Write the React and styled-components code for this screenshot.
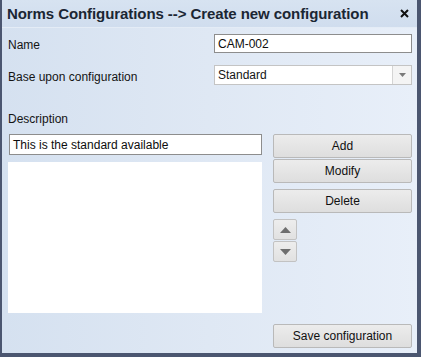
import React from "react";
import styled, { createGlobalStyle } from "styled-components";

const GlobalStyle = createGlobalStyle`
  html, body {
    margin: 0;
    padding: 0;
    background: #ffffff;
  }
  * {
    box-sizing: border-box;
  }
`;

const Window = styled.div`
  width: 421px;
  height: 357px;
  display: flex;
  flex-direction: column;
  border-left: 2px solid #4b5670;
  border-right: 4px solid #4b5670;
  border-bottom: 4px solid #4b5670;
  font-family: "Liberation Sans", Arial, sans-serif;
  font-size: 12px;
  color: #141414;
  background: linear-gradient(to right, #d5e1f0 0%, #dfe8f4 50%, #e8eff9 100%);
`;

const TitleBar = styled.div`
  height: 28px;
  flex: none;
  display: flex;
  align-items: center;
  justify-content: space-between;
  padding: 0 8px 1px 5px;
  background: linear-gradient(to bottom, #d7e3f1, #d0ddee);
  border-bottom: 1px solid #e4ecf6;
`;

const Title = styled.h1`
  margin: 0;
  font-size: 15px;
  font-weight: bold;
  color: #1b2633;
  letter-spacing: -0.08px;
`;

const CloseIcon = styled.svg`
  width: 9px;
  height: 9px;
  margin-top: 1px;
`;

const Body = styled.div`
  flex: 1;
  display: flex;
  flex-direction: column;
  padding: 6px 5px 5px 6px;
`;

const FieldRow = styled.div`
  display: grid;
  grid-template-columns: 206px 198px;
  align-items: center;
  height: ${(p) => p.$h}px;
  margin-bottom: ${(p) => p.$gap || 0}px;
`;

const Label = styled.label`
  padding-top: 3px;
`;

const TextBox = styled.div`
  height: ${(p) => p.$h || 19}px;
  background: #ffffff;
  border: 1px solid ${(p) => (p.$dark ? "#8d8d8d" : "#b6b6b6")};
  display: flex;
  align-items: center;
  padding-left: 3px;
  color: #0d0d0d;
`;

const SelectBox = styled.div`
  height: 20px;
  background: #ffffff;
  border: 1px solid #c4c4c4;
  display: flex;
  align-items: stretch;
`;

const SelectValue = styled.div`
  flex: 1;
  display: flex;
  align-items: center;
  padding-left: 3px;
`;

const SelectArrow = styled.div`
  width: 19px;
  border-left: 1px solid #d4d4d4;
  background: #f4f4f4;
  display: flex;
  align-items: center;
  justify-content: center;
`;

const SectionLabel = styled.div`
  height: 49px;
  display: flex;
  align-items: flex-end;
  padding-bottom: 8px;
`;

const Main = styled.div`
  flex: 1;
  display: grid;
  grid-template-columns: 254px 139px;
  column-gap: 11px;
`;

const LeftColumn = styled.div`
  display: flex;
  flex-direction: column;
  gap: 7px;
  padding-left: 1px;
`;

const ListBox = styled.div`
  height: 151px;
  margin-left: -1px;
  background: #ffffff;
`;

const RightColumn = styled.div`
  display: flex;
  flex-direction: column;
`;

const Button = styled.button`
  height: 24px;
  width: 139px;
  margin: 0 0 ${(p) => p.$gap || 0}px 0;
  padding: 0;
  font-family: inherit;
  font-size: 12px;
  color: #101010;
  border: 1px solid #b9b9b9;
  border-radius: 2px;
  background: linear-gradient(to bottom, #ececec, #dedede);
`;

const ArrowStack = styled.div`
  display: flex;
  flex-direction: column;
  width: 24px;
`;

const ArrowButton = styled.button`
  height: 21px;
  width: 24px;
  padding: 0;
  border: 1px solid #c2c2c2;
  border-radius: 2px;
  background: linear-gradient(to bottom, #ededed, #e1e1e1);
  display: flex;
  align-items: center;
  justify-content: center;
  margin-bottom: 1px;
`;

const Spacer = styled.div`
  flex: 1;
`;

function Triangle({ up, color = "#6e6e6e", w = 11, h = 6 }) {
  return (
    <svg width={w} height={h} viewBox={`0 0 ${w} ${h}`}>
      {up ? (
        <polygon points={`0,${h} ${w},${h} ${w / 2},0`} fill={color} />
      ) : (
        <polygon points={`0,0 ${w},0 ${w / 2},${h}`} fill={color} />
      )}
    </svg>
  );
}

export default function App() {
  return (
    <>
      <GlobalStyle />
      <Window>
        <TitleBar>
          <Title>Norms Configurations --&gt; Create new configuration</Title>
          <CloseIcon viewBox="0 0 9 9">
            <path d="M1 1 L8 8 M8 1 L1 8" stroke="#111" strokeWidth="2" />
          </CloseIcon>
        </TitleBar>
        <Body>
          <FieldRow $h={19} $gap={12}>
            <Label>Name</Label>
            <TextBox $dark>CAM-002</TextBox>
          </FieldRow>
          <FieldRow $h={20}>
            <Label>Base upon configuration</Label>
            <SelectBox>
              <SelectValue>Standard</SelectValue>
              <SelectArrow>
                <Triangle color="#7a7a7a" w={7} h={4} />
              </SelectArrow>
            </SelectBox>
          </FieldRow>
          <SectionLabel>Description</SectionLabel>
          <Main>
            <LeftColumn>
              <TextBox $dark $h={21}>This is the standard available</TextBox>
              <ListBox />
            </LeftColumn>
            <RightColumn>
              <Button $gap={1}>Add</Button>
              <Button $gap={6}>Modify</Button>
              <Button $gap={6}>Delete</Button>
              <ArrowStack>
                <ArrowButton>
                  <Triangle up />
                </ArrowButton>
                <ArrowButton>
                  <Triangle />
                </ArrowButton>
              </ArrowStack>
              <Spacer />
              <Button>Save configuration</Button>
            </RightColumn>
          </Main>
        </Body>
      </Window>
    </>
  );
}
